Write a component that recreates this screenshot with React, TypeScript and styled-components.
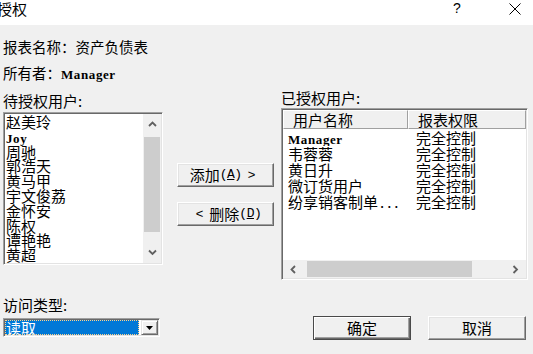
import styled, { createGlobalStyle } from 'styled-components';

const GlobalStyle = createGlobalStyle`
  html, body {
    margin: 0;
    padding: 0;
    background: #f0f0f0;
  }
  body {
    font-family: "Noto Sans CJK SC", sans-serif;
    color: #000;
  }
`;

const Window = styled.div`
  width: 533px;
  height: 354px;
  overflow: hidden;
  background: #f0f0f0;
  display: flex;
  flex-direction: column;
`;

const TitleBar = styled.div`
  height: 25px;
  flex-shrink: 0;
  background: #fff;
  display: flex;
  align-items: flex-start;
`;

const Title = styled.div`
  margin-left: -3px;
  font-size: 15px;
  line-height: 17px;
`;

const Help = styled.div`
  margin-left: auto;
  font-family: "Liberation Sans", sans-serif;
  font-size: 14px;
  line-height: 17px;
  width: 10px;
`;

const CloseIcon = styled.svg`
  margin: 3px 12px 0 46px;
`;

const Content = styled.div`
  padding: 9px 0 0 3px;
  display: flex;
  flex-direction: column;
`;

const InfoLine = styled.div`
  height: 26px;
  line-height: 26px;
  font-size: 14.5px;
  white-space: nowrap;
`;

const Latin = styled.span`
  font-family: "Liberation Serif", serif;
  font-weight: bold;
  font-size: 13px;
  letter-spacing: 0.6px;
`;

const Middle = styled.div`
  display: flex;
  align-items: flex-start;
`;

const Column = styled.div<{ $width: number; $top: number }>`
  width: ${(p) => p.$width}px;
  padding-top: ${(p) => p.$top}px;
  display: flex;
  flex-direction: column;
  flex-shrink: 0;
`;

const Label = styled.div`
  height: 18px;
  line-height: 18px;
  font-size: 15px;
  white-space: nowrap;
`;

const Sunken = styled.div<{ $height: number; $gap: number }>`
  margin-top: ${(p) => p.$gap}px;
  height: ${(p) => p.$height}px;
  box-sizing: border-box;
  background: #fff;
  border-top: 1px solid #a0a0a0;
  border-left: 1px solid #a0a0a0;
  border-bottom: 1px solid #fff;
  border-right: 1px solid #fff;
  box-shadow: inset 1px 1px 0 #696969, inset -1px -1px 0 #e3e3e3;
  padding: 1px;
  display: flex;
  overflow: hidden;
`;

const ItemList = styled.div`
  flex: 1;
  padding: 1px 0 0 1px;
  overflow: hidden;
`;

const Item = styled.div`
  font-size: 15px;
  line-height: 14.8px;
  height: 14.8px;
  white-space: nowrap;
`;

const VScroll = styled.div`
  width: 18px;
  background: #f0f0f0;
  display: flex;
  flex-direction: column;
`;

const ArrowBox = styled.div<{ $size: number }>`
  flex: 0 0 ${(p) => p.$size}px;
  display: flex;
  align-items: center;
  justify-content: center;
`;

const VTrack = styled.div`
  flex: 1;
  padding: 2px 1px 0;
`;

const VThumb = styled.div`
  height: 95px;
  background: #cdcdcd;
`;

const Buttons = styled.div`
  display: flex;
  flex-direction: column;
  gap: 15px;
  padding-left: 14px;
`;

const Button = styled.div<{ $width: number; $default?: boolean }>`
  width: ${(p) => p.$width}px;
  height: 24px;
  box-sizing: border-box;
  background: #f0f0f0;
  border: 1px solid;
  border-color: ${(p) => (p.$default ? '#4a4a4a' : '#fff #696969 #696969 #fff')};
  box-shadow: ${(p) =>
    p.$default
      ? 'inset 1px 1px 0 #fff, inset -1px -1px 0 #696969, inset -2px -2px 0 #a0a0a0'
      : 'inset -1px -1px 0 #a0a0a0, inset 1px 1px 0 #e3e3e3'};
  display: flex;
  align-items: center;
  justify-content: center;
  font-size: 15px;
  line-height: 20px;
  white-space: nowrap;
`;

const Key = styled.span`
  font-family: "Liberation Mono", monospace;
  font-size: 13px;
  letter-spacing: -0.5px;
`;

const Angle = styled.span`
  font-family: "Liberation Sans", sans-serif;
  font-size: 13px;
  margin: 0 6px;
`;

const Grid = styled.div`
  flex: 1;
  display: flex;
  flex-direction: column;
  min-width: 0;
`;

const HeaderRow = styled.div`
  height: 19px;
  display: flex;
  flex-shrink: 0;
`;

const HeaderCell = styled.div<{ $width?: number }>`
  ${(p) => (p.$width ? `width: ${p.$width}px;` : 'flex: 1;')}
  box-sizing: border-box;
  background: #f0f0f0;
  border-top: 1px solid #fff;
  border-left: 1px solid #fff;
  border-right: 1px solid #a0a0a0;
  border-bottom: 1px solid #a0a0a0;
  padding-left: 9px;
  font-size: 15px;
  line-height: 17px;
  white-space: nowrap;
`;

const Rows = styled.div`
  flex: 1;
  padding-top: 1px;
`;

const Row = styled.div`
  display: flex;
  height: 16px;
  line-height: 16px;
  font-size: 15px;
  white-space: nowrap;
`;

const Cell = styled.div<{ $width?: number; $pad: number }>`
  ${(p) => (p.$width ? `width: ${p.$width}px;` : 'flex: 1;')}
  padding-left: ${(p) => p.$pad}px;
  box-sizing: border-box;
  overflow: hidden;
`;

const Dots = styled.span`
  letter-spacing: 3px;
  margin-left: 2px;
`;

const HScroll = styled.div`
  height: 18px;
  flex-shrink: 0;
  background: #f0f0f0;
  display: flex;
`;

const HTrack = styled.div`
  flex: 1;
  padding: 1px 0 1px 3px;
`;

const HThumb = styled.div`
  width: 165px;
  height: 100%;
  background: #cdcdcd;
`;

const BottomRow = styled.div`
  display: flex;
  align-items: flex-start;
  margin-top: 16px;
`;

const Combo = styled.div`
  margin-top: 4px;
  width: 157px;
  height: 19px;
  box-sizing: border-box;
  background: #fff;
  border-top: 1px solid #a0a0a0;
  border-left: 1px solid #a0a0a0;
  border-bottom: 1px solid #fff;
  border-right: 1px solid #fff;
  box-shadow: inset 1px 1px 0 #696969, inset -1px -1px 0 #e3e3e3;
  padding: 1px;
  display: flex;
`;

const Selected = styled.div`
  flex: 1;
  background: #0078d7;
  color: #fff;
  outline: 1px dotted #ffd28a;
  outline-offset: -1px;
  font-size: 15px;
  line-height: 15px;
  padding-left: 1px;
  margin-right: 2px;
`;

const DropButton = styled.div`
  width: 17px;
  box-sizing: border-box;
  background: #f0f0f0;
  border: 1px solid;
  border-color: #e3e3e3 #696969 #696969 #e3e3e3;
  box-shadow: inset 1px 1px 0 #fff, inset -1px -1px 0 #a0a0a0;
  display: flex;
  align-items: center;
  justify-content: center;
`;

const DialogButtons = styled.div`
  display: flex;
  gap: 17px;
  margin-left: 150px;
  padding-top: 20px;
`;

const Chevron = ({ dir }: { dir: 'up' | 'down' | 'left' | 'right' }) => {
  const d = {
    up: 'M1 5 L4.5 1.5 L8 5',
    down: 'M1 1.5 L4.5 5 L8 1.5',
    left: 'M5 1 L1.5 4.5 L5 8',
    right: 'M1.5 1 L5 4.5 L1.5 8',
  }[dir];
  const vertical = dir === 'up' || dir === 'down';
  return (
    <svg width={vertical ? 9 : 7} height={vertical ? 7 : 9} viewBox={vertical ? '0 0 9 7' : '0 0 7 9'}>
      <path d={d} fill="none" stroke="#606060" strokeWidth="1.8" />
    </svg>
  );
};

const pending = ['赵美玲', 'Joy', '周驰', '郭浩天', '黄马甲', '宇文俊荔', '金怀安', '陈权', '谭艳艳', '黄超'];

const granted = ['韦蓉蓉', '黄日升', '微订货用户'];

export default function App() {
  return (
    <>
      <GlobalStyle />
      <Window>
        <TitleBar>
          <Title>授权</Title>
          <Help>?</Help>
          <CloseIcon width="12" height="12" viewBox="0 0 12 12">
            <path d="M0.5 0.5 L11.5 11.5 M11.5 0.5 L0.5 11.5" stroke="#000" strokeWidth="1" />
          </CloseIcon>
        </TitleBar>
        <Content>
          <InfoLine>报表名称：资产负债表</InfoLine>
          <InfoLine>
            所有者：<Latin>Manager</Latin>
          </InfoLine>
          <Middle>
            <Column $width={160} $top={6}>
              <Label>待授权用户:</Label>
              <Sunken $height={153} $gap={2}>
                <ItemList>
                  {pending.map((name) => (
                    <Item key={name}>{name === 'Joy' ? <Latin>{name}</Latin> : name}</Item>
                  ))}
                </ItemList>
                <VScroll>
                  <ArrowBox $size={21}>
                    <Chevron dir="up" />
                  </ArrowBox>
                  <VTrack>
                    <VThumb />
                  </VTrack>
                  <ArrowBox $size={21}>
                    <Chevron dir="down" />
                  </ArrowBox>
                </VScroll>
              </Sunken>
            </Column>
            <Column $width={118} $top={77}>
              <Buttons>
                <Button $width={97}>
                  添加<Key>(<u>A</u>)</Key>
                  <Angle>&gt;</Angle>
                </Button>
                <Button $width={97}>
                  <Angle>&lt;</Angle>删除<Key>(<u>D</u>)</Key>
                </Button>
              </Buttons>
            </Column>
            <Column $width={247} $top={3}>
              <Label>已授权用户:</Label>
              <Sunken $height={172} $gap={1}>
                <Grid>
                  <HeaderRow>
                    <HeaderCell $width={125}>用户名称</HeaderCell>
                    <HeaderCell>报表权限</HeaderCell>
                  </HeaderRow>
                  <Rows>
                    <Row>
                      <Cell $width={125} $pad={5}>
                        <Latin>Manager</Latin>
                      </Cell>
                      <Cell $pad={8}>完全控制</Cell>
                    </Row>
                    {granted.map((name) => (
                      <Row key={name}>
                        <Cell $width={125} $pad={5}>
                          {name}
                        </Cell>
                        <Cell $pad={8}>完全控制</Cell>
                      </Row>
                    ))}
                    <Row>
                      <Cell $width={125} $pad={5}>
                        纷享销客制单<Dots>...</Dots>
                      </Cell>
                      <Cell $pad={8}>完全控制</Cell>
                    </Row>
                  </Rows>
                  <HScroll>
                    <ArrowBox $size={21}>
                      <Chevron dir="left" />
                    </ArrowBox>
                    <HTrack>
                      <HThumb />
                    </HTrack>
                    <ArrowBox $size={21}>
                      <Chevron dir="right" />
                    </ArrowBox>
                  </HScroll>
                </Grid>
              </Sunken>
            </Column>
          </Middle>
          <BottomRow>
            <Column $width={160} $top={0}>
              <Label>访问类型:</Label>
              <Combo>
                <Selected>读取</Selected>
                <DropButton>
                  <svg width="7" height="4" viewBox="0 0 7 4">
                    <path d="M0 0 L7 0 L3.5 4 Z" fill="#000" />
                  </svg>
                </DropButton>
              </Combo>
            </Column>
            <DialogButtons>
              <Button $width={98} $default>
                确定
              </Button>
              <Button $width={98}>取消</Button>
            </DialogButtons>
          </BottomRow>
        </Content>
      </Window>
    </>
  );
}
